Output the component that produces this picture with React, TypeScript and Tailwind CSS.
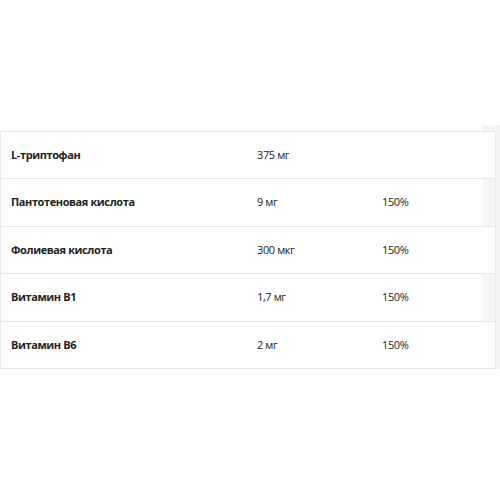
const rows = [
  { name: "L-триптофан", amount: "375 мг", pct: "" },
  { name: "Пантотеновая кислота", amount: "9 мг", pct: "150%" },
  { name: "Фолиевая кислота", amount: "300 мкг", pct: "150%" },
  { name: "Витамин B1", amount: "1,7 мг", pct: "150%" },
  { name: "Витамин B6", amount: "2 мг", pct: "150%" },
]

export default function App() {
  return (
    <div className="w-[500px] h-[500px] bg-white font-['Open_Sans',sans-serif] text-[11px] tracking-[-0.4px] text-[#222]">
      <div className="pt-[125px] flex">
        <div className="w-[496px] pt-[6px]">
          <div className="border border-[#e9e9e9] border-b-0 relative">
            <div className="absolute right-0 top-[-7px] w-[13px] h-[6px] bg-[#f5f5f5]" />
            {rows.map((r, i) => (
              <div key={r.name} className="flex items-center h-[47.4px] border-b border-[#e9e9e9]">
                <div className="w-[248px] pl-[10px] font-bold">{r.name}</div>
                <div className="w-[123px] pl-[8px]">{r.amount}</div>
                <div className="flex-1 pl-[10px]">{r.pct}</div>
                <div className={i % 2 === 1 ? "w-[13px] self-stretch bg-[#f6f6f6]" : "w-[13px]"} />
              </div>
            ))}
          </div>
        </div>
        <div className="w-[4px] h-[244px] bg-[#f3f3f3]" />
      </div>
    </div>
  )
}
